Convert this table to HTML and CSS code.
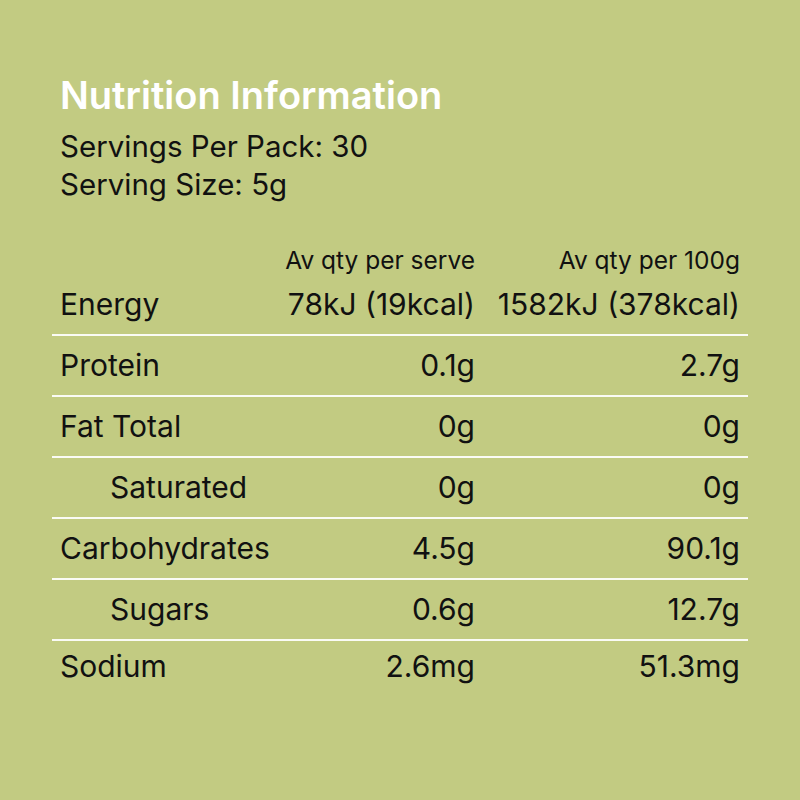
FILE: index.html
```html
<!DOCTYPE html>
<html lang="en">
<head>
<meta charset="utf-8">
<title>Nutrition Information</title>
<link rel="stylesheet" href="styles.css">
</head>
<body>
<main class="panel">
  <h1 class="title">Nutrition Information</h1>
  <p class="meta">Servings Per Pack: 30<br>Serving Size: 5g</p>
  <table class="facts">
    <colgroup>
      <col class="c-label">
      <col class="c-serve">
      <col class="c-100">
    </colgroup>
    <thead>
      <tr class="head-row">
        <th></th>
        <th>Av qty per serve</th>
        <th>Av qty per 100g</th>
      </tr>
    </thead>
    <tbody>
      <tr><td>Energy</td><td>78kJ (19kcal)</td><td>1582kJ (378kcal)</td></tr>
      <tr><td>Protein</td><td>0.1g</td><td>2.7g</td></tr>
      <tr><td>Fat Total</td><td>0g</td><td>0g</td></tr>
      <tr><td class="sub">Saturated</td><td>0g</td><td>0g</td></tr>
      <tr><td>Carbohydrates</td><td>4.5g</td><td>90.1g</td></tr>
      <tr><td class="sub">Sugars</td><td>0.6g</td><td>12.7g</td></tr>
      <tr class="last"><td>Sodium</td><td>2.6mg</td><td>51.3mg</td></tr>
    </tbody>
  </table>
</main>
</body>
</html>
```
FILE: styles.css
```css
html, body {
  margin: 0;
  padding: 0;
  background: #c2cb82;
}
body {
  width: 800px;
  height: 800px;
  font-family: "Inter", "Lato", sans-serif;
  color: #111;
}
.panel {
  padding: 73px 52px 0 52px;
}
.title {
  margin: 0 0 0 8px;
  font-size: 38px;
  line-height: 44px;
  font-weight: 600;
  color: #fff;
}
.meta {
  margin: 10px 0 0 8px;
  font-size: 29.5px;
  line-height: 38px;
}
.facts {
  margin-top: 32px;
  width: 696px;
  border-collapse: collapse;
  table-layout: fixed;
}
.c-label { width: 200px; }
.c-serve { width: 231px; }
.c-100 { width: 265px; }
.facts th {
  font-weight: 400;
  font-size: 24.5px;
  line-height: 26px;
  height: 38px;
  padding: 0 8px 2px 8px;
  vertical-align: bottom;
  text-align: right;
  white-space: nowrap;
}
.facts td {
  height: 57px;
  padding: 0 8px 2px 8px;
  font-size: 30px;
  vertical-align: middle;
  text-align: right;
  border-bottom: 2px solid rgba(255,255,255,0.92);
  white-space: nowrap;
}
.facts td:first-child {
  text-align: left;
}
.facts td.sub {
  padding-left: 58px;
}
.facts tr.last td {
  border-bottom: none;
  height: 50px;
  padding-bottom: 0;
}
```
